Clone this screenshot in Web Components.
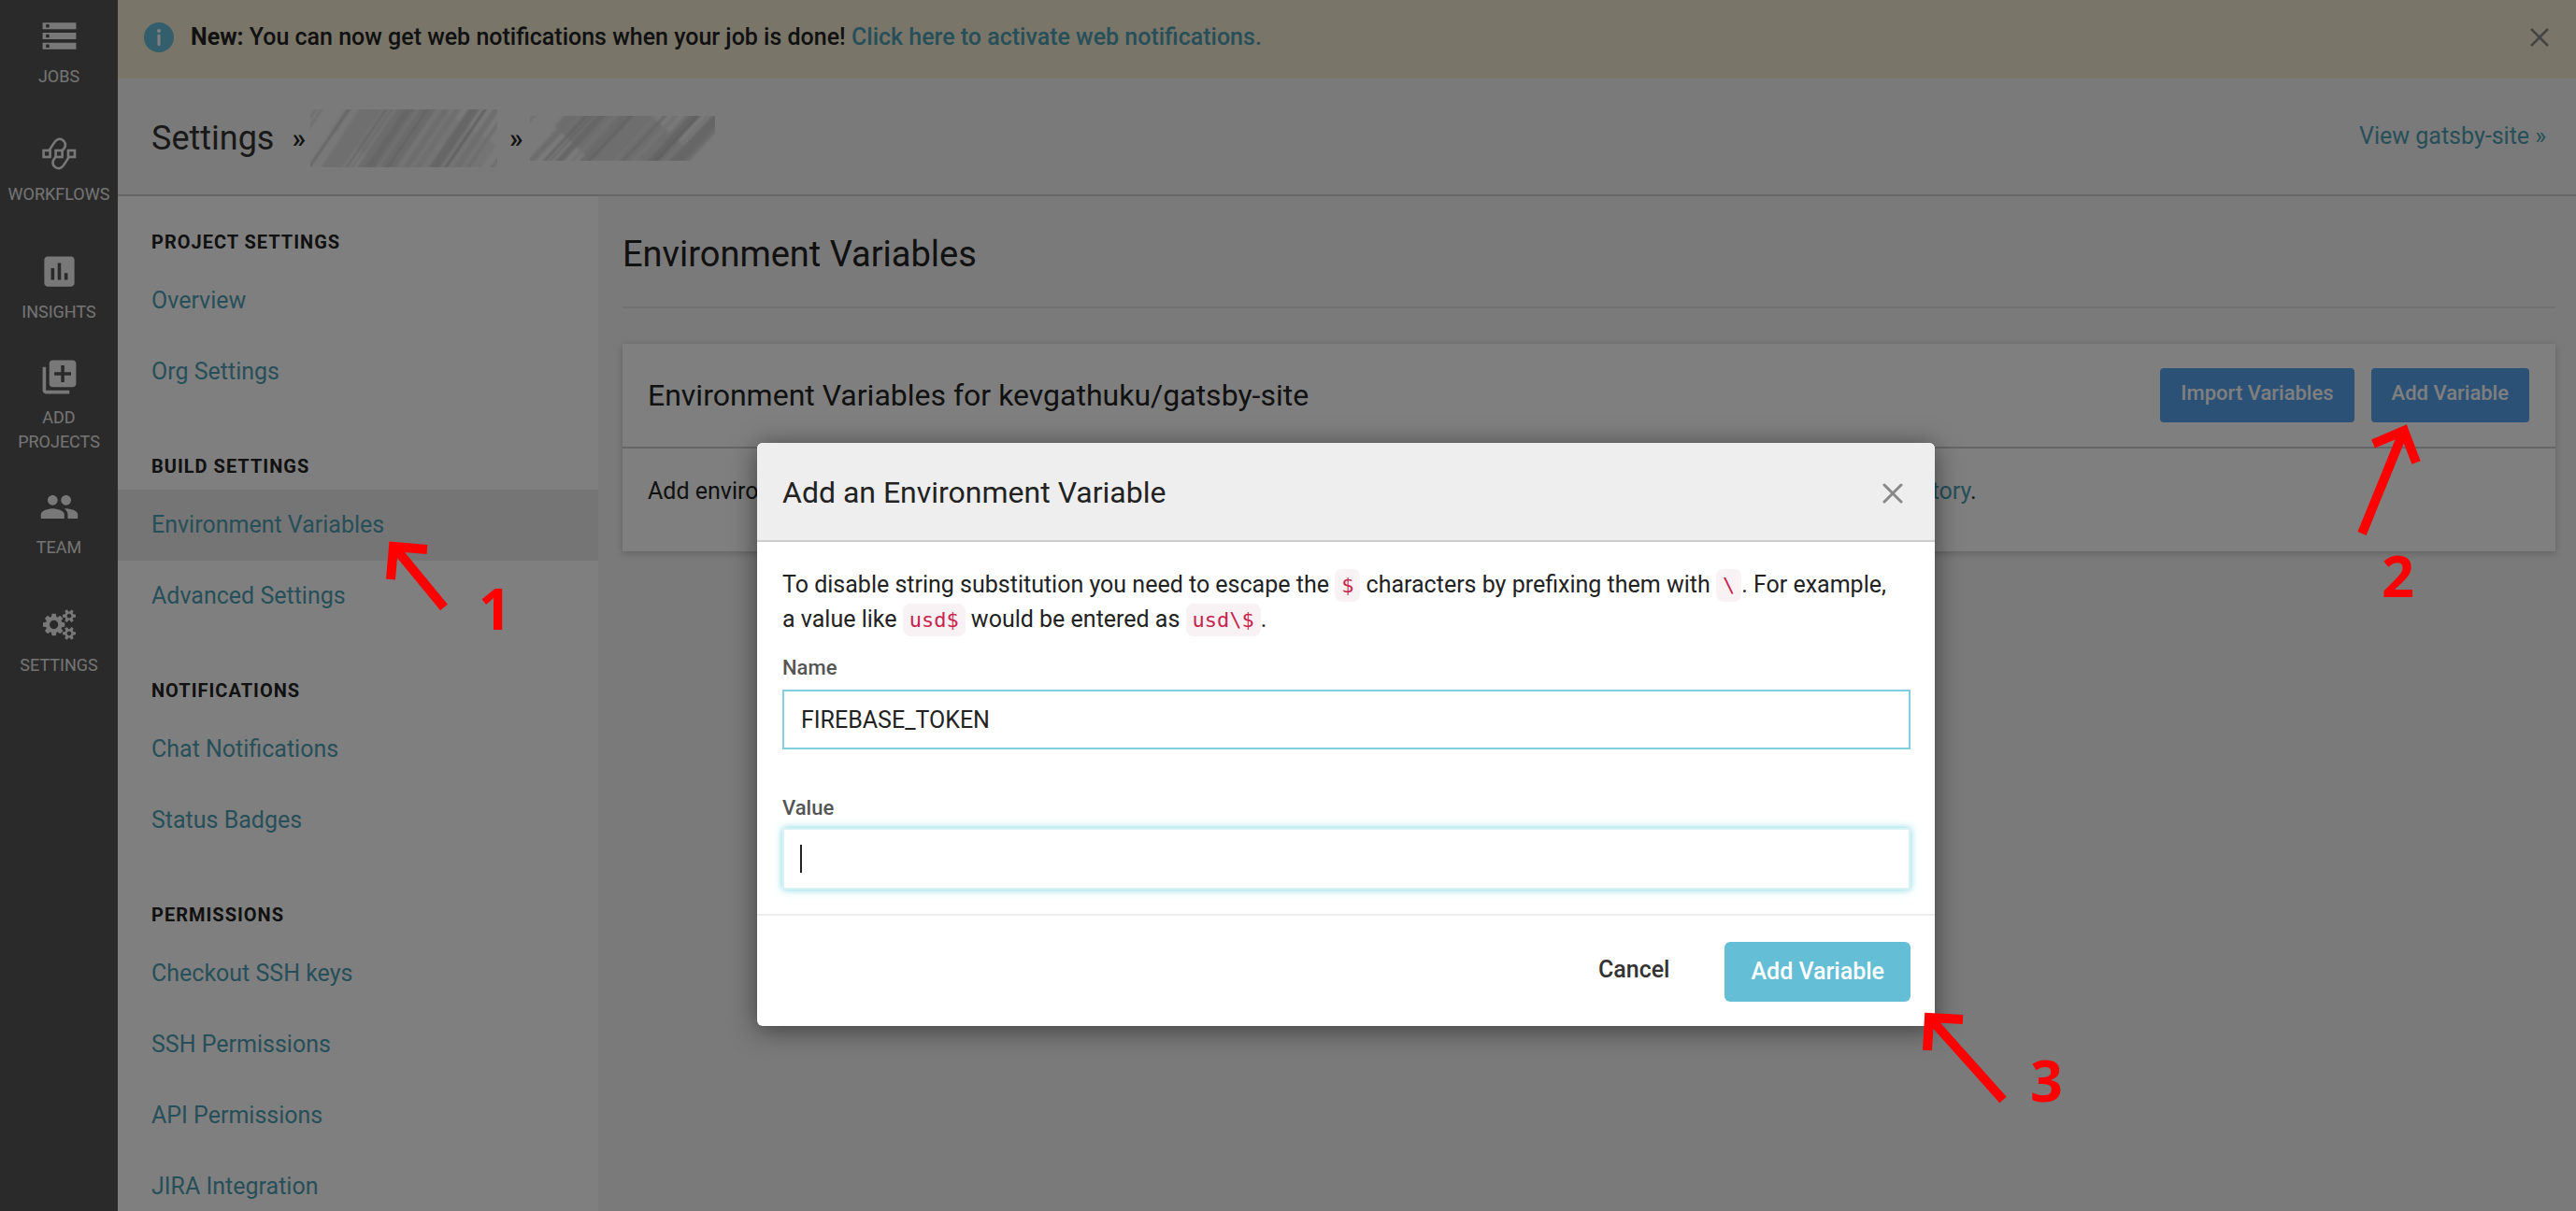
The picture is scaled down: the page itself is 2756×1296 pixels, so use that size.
<!DOCTYPE html>
<html lang="en">
<head>
<meta charset="utf-8">
<title>Settings - Environment Variables</title>
<style>
  html, body { margin: 0; height: 100%; overflow: hidden; }
  body { font-family: Roboto, "Liberation Sans", sans-serif; color: #222; background: #f4f4f4; }
</style>
</head>
<body>
<ci-app></ci-app>
<script>
const define = (name, html, setup) => {
  const tpl = document.createElement('template');
  tpl.innerHTML = html;
  customElements.define(name, class extends HTMLElement {
    constructor() {
      super();
      this.attachShadow({ mode: 'open' }).append(tpl.content.cloneNode(true));
    }
    connectedCallback() { if (setup) setup(this, this.shadowRoot); }
  });
};

/* ---- left rail ---- */
define('rail-item', `
<style>
  :host { display: flex; height: 112px; margin-bottom: 14px; }
  a { flex: 1; display: flex; flex-direction: column; align-items: center; justify-content: center; gap: 9px;
      color: #e8e8e8; text-decoration: none; font-size: 18px; line-height: 26px; text-align: center; text-transform: uppercase; }
  ::slotted(svg) { width: 43px; height: 43px; fill: #f0f0f0; display: block; }
</style>
<a href="#"><slot name="icon"></slot><span><slot></slot></span></a>`);

define('nav-rail', `
<style>
  :host { display: block; background: #555; }
  nav { display: flex; flex-direction: column; }
</style>
<nav aria-label="Main">
  <rail-item><svg slot="icon" viewBox="0 0 24 24"><path d="M2 20h20v-4H2v4zm2-3h2v2H4v-2zM2 4v4h20V4H2zm4 3H4V5h2v2zm-4 7h20v-4H2v4zm2-3h2v2H4v-2z"/></svg>Jobs</rail-item>
  <rail-item><svg slot="icon" viewBox="0 0 43 43"><g style="fill:none;stroke:#f0f0f0;stroke-width:2.6"><rect x="4.6" y="18" width="7" height="7"/><rect x="17.6" y="18" width="7" height="7"/><rect x="31" y="18" width="7" height="7"/><path d="M10.8 17.6 16 9.6C18.6 5.6 22.2 4.8 25.2 7 28.4 9.6 28.6 12.8 26.6 15.8L24.6 18.6M31.6 25.4 26.4 33.4C23.8 37.4 20.2 38.2 17.2 36 14 33.4 13.8 30.2 15.8 27.2L17.8 24.4"/></g></svg>Workflows</rail-item>
  <rail-item><svg slot="icon" viewBox="0 0 24 24"><path d="M19 3H5c-1.1 0-2 .9-2 2v14c0 1.1.9 2 2 2h14c1.1 0 2-.9 2-2V5c0-1.1-.9-2-2-2zM9 17H7v-7h2v7zm4 0h-2V7h2v10zm4 0h-2v-4h2v4z"/></svg>Insights</rail-item>
  <rail-item><svg slot="icon" viewBox="0 0 24 24"><path d="M4 6H2v14c0 1.100.9 2 2 2h14v-2H4V6zm16-4H8c-1.100 0-2 .9-2 2v12c0 1.100.9 2 2 2h12c1.100 0 2-.9 2-2V4c0-1.100-.9-2-2-2zm-1 9h-4v4h-2v-4H9V9h4V5h2v4h4v2z"/></svg>Add<br>Projects</rail-item>
  <rail-item><svg slot="icon" viewBox="0 0 24 24"><path d="M16 11c1.660 0 2.990-1.340 2.990-3S17.660 5 16 5c-1.660 0-3 1.340-3 3s1.340 3 3 3zm-8 0c1.660 0 2.990-1.340 2.990-3S9.660 5 8 5C6.340 5 5 6.340 5 8s1.340 3 3 3zm0 2c-2.330 0-7 1.170-7 3.500V19h14v-2.500c0-2.330-4.670-3.500-7-3.500zm8 0c-.29 0-.62.02-.97.05 1.160.84 1.970 1.970 1.970 3.450V19h6v-2.500c0-2.330-4.670-3.500-7-3.500z"/></svg>Team</rail-item>
  <rail-item><svg slot="icon" viewBox="-219 -283 2359 2359"><path d="M896 896q0-106-75-181t-181-75-181 75-75 181 75 181 181 75 181-75 75-181zm768 512q0-52-38-90t-90-38-90 38-38 90q0 53 37.500 90.500t90.500 37.500 90.500-37.500 37.500-90.500zm0-1024q0-52-38-90t-90-38-90 38-38 90q0 53 37.500 90.500t90.500 37.500 90.500-37.500 37.500-90.500zm-384 421v185q0 10-7 19.500t-16 10.500l-155 24q-11 35-32 76 34 48 90 115 7 11 7 20 0 12-7 19-23 30-82.500 89.500t-78.500 59.500q-11 0-21-7l-115-90q-37 19-77 31-11 108-23 155-7 24-30 24h-186q-11 0-20-7.500t-10-17.500l-23-153q-34-10-75-31l-118 89q-7 7-20 7-11 0-21-8-144-133-144-160 0-9 7-19 10-14 41-53t47-61q-23-44-35-82l-152-24q-10-1-17-9.500t-7-19.500v-185q0-10 7-19.500t16-10.500l155-24q11-35 32-76-34-48-90-115-7-11-7-20 0-12 7-20 22-30 82-89t79-59q11 0 21 7l115 90q34-18 77-32 11-108 23-154 7-24 30-24h186q11 0 20 7.500t10 17.500l23 153q34 10 75 31l118-89q8-7 20-7 11 0 21 8 144 133 144 160 0 8-7 19-12 16-42 54t-45 60q23 48 34 82l152 23q10 2 17 10.500t7 19.500zm640 533v140q0 16-149 31-12 27-30 52 51 113 51 138 0 4-4 7-122 71-124 71-8 0-46-47t-52-68q-20 2-30 2t-30-2q-14 21-52 68t-46 47q-2 0-124-71-4-3-4-7 0-25 51-138-18-25-30-52-149-15-149-31v-140q0-16 149-31 13-29 30-52-51-113-51-138 0-4 4-7 4-2 35-20t59-34 30-16q8 0 46 46.500t52 67.500q20-2 30-2t30 2q51-71 92-112l6-2q4 0 124 70 4 3 4 7 0 25-51 138 17 23 30 52 149 15 149 31zm0-1024v140q0 16-149 31-12 27-30 52 51 113 51 138 0 4-4 7-122 71-124 71-8 0-46-47t-52-68q-20 2-30 2t-30-2q-14 21-52 68t-46 47q-2 0-124-71-4-3-4-7 0-25 51-138-18-25-30-52-149-15-149-31v-140q0-16 149-31 13-29 30-52-51-113-51-138 0-4 4-7 4-2 35-20t59-34 30-16q8 0 46 46.500t52 67.500q20-2 30-2t30 2q51-71 92-112l6-2q4 0 124 70 4 3 4 7 0 25-51 138 17 23 30 52 149 15 149 31z"/></svg>Settings</rail-item>
</nav>`);

/* ---- notification banner ---- */
define('notice-banner', `
<style>
  :host { display: flex; align-items: center; gap: 18px; height: 84px; box-sizing: border-box; padding: 0 28px 4px; background: #f3ebd1;
          font-size: 25px; line-height: 36px; font-weight: 500; }
  p { margin: 0; flex: 1; }
  b { font-weight: 700; }
  a { color: #4f9eb3; text-decoration: none; }
  svg { display: block; }
  button { border: 0; background: none; padding: 0; }
</style>
<svg width="32" height="32" viewBox="0 0 32 32" aria-hidden="true"><circle cx="16" cy="16" r="16" fill="#64bed6"/><circle cx="16" cy="9" r="2" fill="#fff"/><path d="M16 14v9.500" stroke="#fff" stroke-width="3.200" stroke-linecap="round"/></svg>
<p><b>New:</b> You can now get web notifications when your job is done! <a href="#">Click here to activate web notifications.</a></p>
<button aria-label="Dismiss"><svg width="22" height="22" viewBox="0 0 22 22"><path d="M2 2 20 20M20 2 2 20" stroke="#888" stroke-width="2.600"/></svg></button>`);

/* ---- brushed-out name ---- */
define('hidden-name', `
<style>
  :host { display: block; }
  svg { display: block; overflow: hidden; }
  g { filter: blur(1px); }
</style>
<svg></svg>`, (host, root) => {
  const w = +host.getAttribute('w'), h = +host.getAttribute('h'), slant = +host.getAttribute('slant');
  const svg = root.querySelector('svg');
  svg.setAttribute('width', w); svg.setAttribute('height', h);
  const sets = {
    owner: [[110,190,'#e9e9e9'],[-15,2,'#cfcfcf'],[-9,2,'#d2d2d2'],[20,3,'#c6c6c6'],[27,7,'#f0f0f0'],[44,24,'#dfdfdf'],[60,3,'#cdcdcd'],[66,2,'#cfcfcf'],
      [82,22,'#d8d8d8'],[84,8,'#cccccc'],[104,18,'#d6d6d6'],[104,2,'#c2c2c2'],[124,8,'#dadada'],[136,8,'#dedede'],
      [154,12,'#cdcdcd'],[166,3,'#b8b8b8'],[178,8,'#dcdcdc'],[190,4,'#dadada'],[216,3,'#d4d4d4']],
    project: [[98,150,'#dcdcdc'],[-18,2,'#cfcfcf'],[24,8,'#dadada'],[38,3,'#c2c2c2'],[44,2,'#c6c6c6'],[54,8,'#cccccc'],[68,4,'#e4e4e4'],[82,12,'#d4d4d4'],[86,2,'#bebebe'],
      [104,4,'#dedede'],[113,3,'#e6e6e6'],[122,3,'#c8c8c8'],[134,6,'#e4e4e4'],[146,5,'#dcdcdc'],[154,10,'#cacaca'],[158,3,'#bcbcbc'],[168,3,'#e4e4e4'],[180,14,'#cdcdcd'],[190,5,'#d8d8d8']]
  };
  svg.innerHTML = '<g>' + sets[host.getAttribute('kind')].map(([x, s, c]) =>
    `<path d="M${x - slant / 2 - 4} ${h + 5}L${x + slant / 2 + 4} -5" stroke="${c}" stroke-width="${s * 0.82}"/>`).join('') + '</g>';
});

/* ---- page header ---- */
define('page-header', `
<style>
  :host { display: flex; align-items: center; justify-content: space-between; height: 126px; box-sizing: border-box;
          padding: 4px 32px 0 36px; border-bottom: 2px solid #ccc; background: #f4f4f4; }
  nav { display: flex; align-items: center; }
  .root { font-size: 36px; line-height: 44px; color: #333; margin-right: 19px; }
  .sep { font-size: 30px; line-height: 36px; font-weight: 500; margin-right: 5px; }
  hidden-name + .sep { margin-left: 13px; margin-right: 7px; }
  a { color: #4f9eb3; font-size: 25px; line-height: 36px; text-decoration: none; padding-bottom: 4px; }
</style>
<nav aria-label="Breadcrumb"><span class="root">Settings</span><span class="sep">»</span><hidden-name kind="owner" w="200" h="62" slant="41"></hidden-name><span class="sep">»</span><hidden-name kind="project" w="198" h="48" slant="46"></hidden-name></nav>
<a href="#">View gatsby-site »</a>`);

/* ---- settings menu ---- */
define('menu-group', `
<style>
  :host { display: block; }
  h2 { margin: 0 0 13px; padding: 0 36px; font-size: 20px; line-height: 24px; font-weight: 700; letter-spacing: 1px; text-transform: uppercase; }
  ::slotted(a) { display: block; padding: 0 36px; font-size: 25px; line-height: 76px; color: #4f9eb3; text-decoration: none; }
  ::slotted(a[aria-current]) { background: #eaeaea; }
</style>
<h2></h2><slot></slot>`, (host, root) => { root.querySelector('h2').textContent = host.getAttribute('heading'); });

define('settings-menu', `
<style>
  :host { display: block; background: #fff; }
  nav { display: flex; flex-direction: column; gap: 51px; padding-top: 37px; }
</style>
<nav aria-label="Settings">
  <menu-group heading="Project Settings"><a href="#">Overview</a><a href="#">Org Settings</a></menu-group>
  <menu-group heading="Build Settings"><a href="#" aria-current="page">Environment Variables</a><a href="#">Advanced Settings</a></menu-group>
  <menu-group heading="Notifications"><a href="#">Chat Notifications</a><a href="#">Status Badges</a></menu-group>
  <menu-group heading="Permissions"><a href="#">Checkout SSH keys</a><a href="#">SSH Permissions</a><a href="#">API Permissions</a><a href="#">JIRA Integration</a></menu-group>
</nav>`);

/* ---- card and content ---- */
define('variables-card', `
<style>
  :host { display: block; background: #fff; box-shadow: 0 2px 8px rgba(0,0,0,.2); }
  header { display: flex; align-items: center; gap: 18px; height: 110px; padding: 0 28px 0 27px; border-bottom: 2px solid #ccc; }
  h2 { flex: 1; margin: 0; font-size: 32px; line-height: 40px; font-weight: 400; }
  button { font: 500 22px/26px Roboto, sans-serif; color: #fff; background: #58a2ee; border: 0; border-radius: 4px; height: 58px; padding: 0 22px 4px; }
  p { margin: 0; padding: 28px 27px 46px; font-size: 25px; line-height: 36px; white-space: nowrap; }
  a { color: #4f9eb3; text-decoration: none; }
</style>
<header><h2>Environment Variables for kevgathuku/gatsby-site</h2><button>Import Variables</button><button>Add Variable</button></header>
<p>Add environment variables to the jobs. You can add sensitive data (e.g. API keys) here, rather than <a href="#">placing them in the repository</a>.</p>`);

define('settings-content', `
<style>
  :host { display: block; padding: 0 22px 0 26px; }
  h1 { margin: 0 0 38px; padding: 40px 0 34px; font-size: 38px; line-height: 44px; font-weight: 400; border-bottom: 2px solid #e2e2e2; }
</style>
<h1>Environment Variables</h1>
<variables-card></variables-card>`);

/* ---- dialog ---- */
define('text-field', `
<style>
  :host { display: block; position: relative; }
  label { display: block; font-size: 22px; line-height: 26px; font-weight: 500; color: #555; margin-bottom: 10px; }
  input { display: block; width: 100%; height: 64px; box-sizing: border-box; border: 2px solid #82d0dd; background: #fff; padding: 0 18px;
          font: 400 25px/36px Roboto, sans-serif; color: #222; outline: 0; }
  :host([active]) input { height: 66px; margin-top: -2px; border-color: #d9f2f6; box-shadow: 0 0 8px #7ad4e2; }
  i { display: none; position: absolute; left: 19px; bottom: 18px; width: 2px; height: 30px; background: #222; }
  :host([active]) i { display: block; }
</style>
<label for="box"></label><input id="box" type="text"><i></i>`, (host, root) => {
  root.querySelector('label').textContent = host.getAttribute('label');
  root.querySelector('input').value = host.getAttribute('value') || '';
});

define('variable-dialog', `
<style>
  :host { display: block; width: 1260px; background: #fff; border-radius: 6px; box-shadow: 0 4px 28px rgba(0,0,0,.5); overflow: hidden; }
  header { display: flex; align-items: center; justify-content: space-between; height: 102px; padding: 2px 34px 0 27px; background: #eee; border-bottom: 2px solid #ccc; }
  h2 { margin: 0; font-size: 32px; line-height: 40px; font-weight: 400; }
  .close { border: 0; background: none; padding: 2px 0 0; }
  .close svg { display: block; }
  form { margin: 0; padding: 28px 26px 26px 27px; }
  p { margin: 0 0 20px; font-size: 25px; line-height: 36px; }
  p span { display: block; }
  code { font: 22px/36px "DejaVu Sans Mono", monospace; color: #c7254e; background: #f9f2f4; border-radius: 8px; padding: 5px 7px; }
  text-field + text-field { margin-top: 50px; }
  footer { display: flex; justify-content: flex-end; align-items: center; height: 120px; box-sizing: border-box; padding: 2px 26px 0; border-top: 2px solid #eee; }
  footer button { border: 0; border-radius: 6px; height: 64px; font: 500 25px/30px Roboto, sans-serif; background: none; color: #333; padding: 0 59px 4px; }
  footer button.go { background: #64bed6; color: #fff; padding: 0 28px; }
</style>
<header><h2>Add an Environment Variable</h2><button class="close" aria-label="Close"><svg width="22" height="22" viewBox="0 0 22 22"><path d="M2 2 20 20M20 2 2 20" stroke="#888" stroke-width="3" stroke-linecap="round"/></svg></button></header>
<form>
  <p><span>To disable string substitution you need to escape the <code>$</code> characters by prefixing them with <code>\\</code>. For example,</span>
  <span>a value like <code>usd$</code> would be entered as <code>usd\\$</code>.</span></p>
  <text-field label="Name" value="FIREBASE_TOKEN"></text-field>
  <text-field label="Value" active></text-field>
</form>
<footer><button>Cancel</button><button class="go">Add Variable</button></footer>`);

/* ---- step markers ---- */
define('step-markers', `
<style>
  :host { display: block; position: absolute; inset: 0; pointer-events: none; }
  svg { display: block; width: 100%; height: 100%; }
  path { fill: none; stroke: #f00; stroke-width: 10; stroke-miterlimit: 10; }
  text { font: 700 61px "Open Sans", sans-serif; fill: #f00; }
</style>
<svg>
  <path d="M457 588 421 585 418 620M424 588 475 650"/><text x="512" y="674">1</text>
  <path d="M2539 475 2572 461 2585 495M2571 463 2527 571"/><text x="2548" y="639">2</text>
  <path d="M2100 1091 2064 1089 2062 1124M2067 1092 2143 1177"/><text x="2172" y="1179">3</text>
</svg>`);

define('ci-app', `
<style>
  :host { display: grid; grid-template-columns: 126px minmax(0, 1fr); height: 100vh; overflow: hidden; position: relative; }
  main { display: flex; flex-direction: column; min-height: 0; }
  .body { flex: 1; display: grid; grid-template-columns: 514px minmax(0, 1fr); min-height: 0; }
  .shade { position: absolute; inset: 0; display: flex; justify-content: center; align-items: flex-start;
           padding: 474px 0 0 124px; background: rgba(0,0,0,.5); }
</style>
<nav-rail></nav-rail>
<main>
  <notice-banner></notice-banner>
  <page-header></page-header>
  <div class="body"><settings-menu></settings-menu><settings-content></settings-content></div>
</main>
<div class="shade"><variable-dialog role="dialog"></variable-dialog></div>
<step-markers></step-markers>`);
</script>
</body>
</html>
